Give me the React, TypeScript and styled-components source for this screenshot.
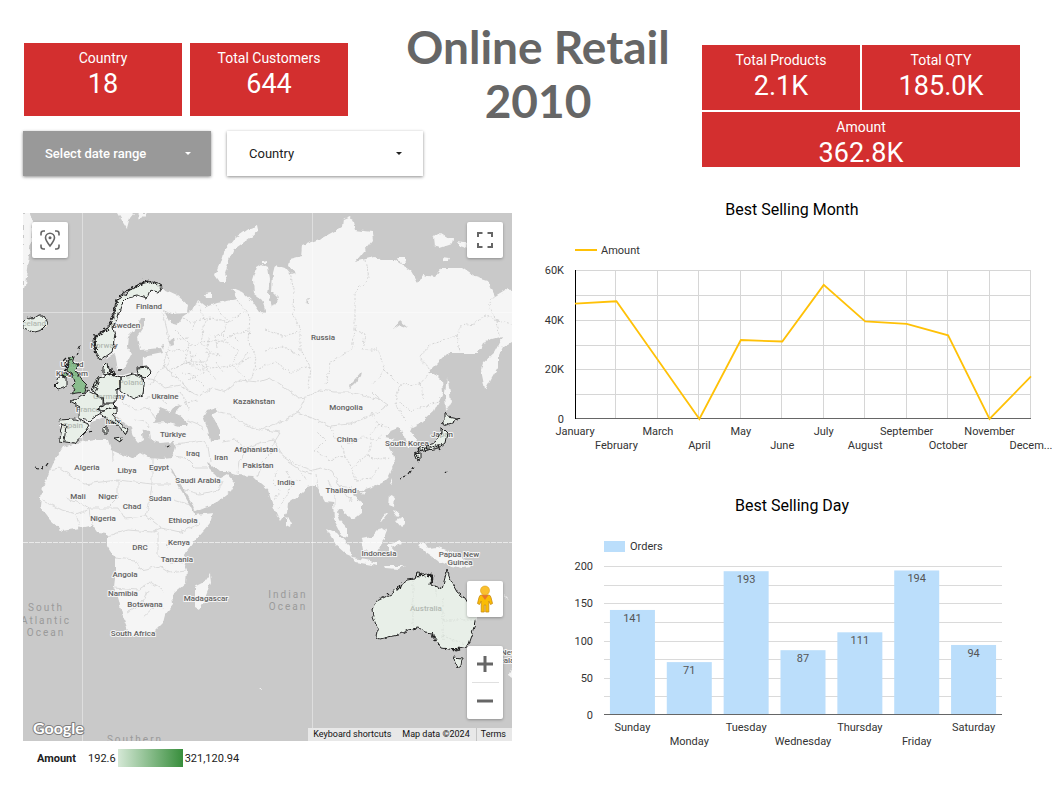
import React from "react";
import styled, { createGlobalStyle } from "styled-components";

const GlobalStyle = createGlobalStyle`
  * { box-sizing: border-box; }
  body {
    margin: 0;
    background: #fff;
    color: #212121;
    font-family: Roboto, "Liberation Sans", sans-serif;
  }
  button, select { font-family: inherit; margin: 0; border: 0; }
`;

const Page = styled.main`
  overflow: hidden;
  padding: 20px 0 16px 23px;
`;

const Header = styled.header`
  display: grid;
  grid-template-columns: minmax(0, 351fr) minmax(0, 328fr) minmax(0, 318fr);
  grid-template-areas: "counts title totals" "filters filters totals";
  row-gap: 3px;
  padding-right: 32px;
`;

const Title = styled.h1`
  grid-area: title;
  margin: 0;
  text-align: center;
  font: 700 46px/54px Lato, "Open Sans", sans-serif;
  color: #666;
`;

const Counts = styled.section`
  grid-area: counts;
  display: grid;
  grid-template-columns: 1fr 1fr;
  grid-template-rows: 73px;
  gap: 8px;
  padding: 23px 26px 0 1px;
`;

const Totals = styled.section`
  grid-area: totals;
  display: grid;
  grid-template-columns: 1fr 1fr;
  grid-template-rows: 65px 55px;
  gap: 2px;
  padding-top: 25px;
`;

const Scorecard = styled.div<{ $wide?: boolean }>`
  grid-column: ${(p) => (p.$wide ? "1 / -1" : "auto")};
  padding-top: 6px;
  background: #d32f2f;
  color: #fff;
  text-align: center;
`;

const ScoreLabel = styled.div`
  font-size: 14px;
  line-height: 18px;
`;

const ScoreValue = styled.div`
  font-size: 27px;
  line-height: 34px;
`;

const Filters = styled.section`
  grid-area: filters;
  display: flex;
  gap: 16px;
`;

const DateButton = styled.button`
  display: flex;
  align-items: center;
  justify-content: space-between;
  width: 188px;
  height: 45px;
  padding: 0 20px 0 22px;
  background: #999;
  color: #fff;
  font-size: 13px;
  font-weight: 500;
  box-shadow: 0 1px 3px rgba(0, 0, 0, 0.45);
`;

const SelectBox = styled.div`
  display: grid;
  align-items: center;
  width: 196px;
  height: 45px;
  background: #fff;
  box-shadow: 0 1px 3px rgba(0, 0, 0, 0.45);

  > * { grid-area: 1 / 1; }
  > svg { justify-self: end; margin-right: 21px; pointer-events: none; }
`;

const Select = styled.select`
  appearance: none;
  width: 100%;
  height: 100%;
  padding: 0 22px;
  background: transparent;
  color: #212121;
  font-size: 13px;
`;

const Body = styled.div`
  display: grid;
  grid-template-columns: minmax(0, 489fr) minmax(0, 540fr);
  margin-top: 24px;
`;

const MapColumn = styled.section`
  padding-top: 13px;
`;

const MapFrame = styled.div`
  position: relative;
  aspect-ratio: 489 / 528;
  overflow: hidden;
  background: #c9c9c9;
`;

const MapDrawing = styled.svg`
  display: block;
  width: 100%;
  height: 100%;
`;

const MapStack = styled.div<{ $side: "left" | "right"; $top?: number; $bottom?: number }>`
  position: absolute;
  ${(p) => p.$side}: 9px;
  ${(p) => (p.$top !== undefined ? `top: ${p.$top}px;` : `bottom: ${p.$bottom}px;`)}
  display: flex;
  flex-direction: column;
  align-items: center;
  width: 36px;
  border-radius: 2px;
  background: #fff;
  box-shadow: 0 1px 3px rgba(0, 0, 0, 0.3);
`;

const MapButton = styled.button`
  display: flex;
  align-items: center;
  justify-content: center;
  width: 36px;
  height: 36px;
  padding: 0;
  background: transparent;
  color: #666;
`;

const Divider = styled.span`
  width: 27px;
  height: 1px;
  background: #e0e0e0;
`;

const Attribution = styled.div`
  position: absolute;
  right: 0;
  bottom: 0;
  display: flex;
  height: 13px;
  background: #e8e8e8;
  color: #111;
  font-size: 9px;
  line-height: 13px;
`;

const Credit = styled.span`
  padding: 0 6px 0 5px;
`;

const ShortcutButton = styled.button`
  padding: 0 6px 0 5px;
  background: transparent;
  color: inherit;
  font-size: 9px;
  line-height: 13px;
`;

const TermsLink = styled.a`
  padding: 0 6px 0 4px;
  border-left: 1px solid #c4c4c4;
  color: inherit;
  text-decoration: none;
`;

const MapLegend = styled.div`
  display: flex;
  align-items: center;
  height: 18px;
  margin-top: 8px;
  padding-left: 14px;
  gap: 2px;
  font-size: 11px;
`;

const LegendName = styled.strong`
  margin-right: 10px;
  font-weight: 700;
`;

const Gradient = styled.span`
  width: 65px;
  height: 18px;
  background: linear-gradient(90deg, #d5e8d6, #388e3c);
`;

const Charts = styled.section`
  padding-left: 20px;
`;

const Chart = styled.figure`
  margin: 0 0 40px;
`;

const ChartTitle = styled.figcaption`
  margin-bottom: 16px;
  text-align: center;
  font-size: 16px;
  line-height: 20px;
  color: #000;
`;

const Plot = styled.svg`
  display: block;
  width: 100%;
  font-size: 11px;
  fill: #333;
`;

const CountryText = styled.text`
  font-size: 8px;
  font-weight: 500;
  text-anchor: middle;
  fill: #616161;
  stroke: #f5f5f5;
  stroke-width: 2px;
  stroke-linejoin: round;
  paint-order: stroke;
`;

const OceanText = styled.text`
  font-size: 10px;
  letter-spacing: 2px;
  text-anchor: middle;
  fill: #9a9a9a;
`;

const LogoText = styled.text`
  font: 700 16px Lato, sans-serif;
  fill: #fff;
  stroke: #808080;
  stroke-width: 2px;
  stroke-linejoin: round;
  paint-order: stroke;
`;

const Caret = () => (
  <svg width="6" height="3" viewBox="0 0 6 3" aria-hidden="true">
    <path d="M0 0h6L3 3z" fill="currentColor" />
  </svg>
);

const Score = ({ label, value, wide }: { label: string; value: string; wide?: boolean }) => (
  <Scorecard $wide={wide}>
    <ScoreLabel>{label}</ScoreLabel>
    <ScoreValue>{value}</ScoreValue>
  </Scorecard>
);

const land = [
  // Eurasia and Africa
  "M145 281L162 288 177 295 188 305 187 313 172 314 163 310 170 323 177 325 183 317 193 310 198 300 207 307 217 303 237 299 232 288 242 292 253 302 260 312 266 313 262 300 254 294 253 280 257 267 262 264 268 267 270 280 268 293 272 307 278 298 272 292 273 273 275 265 285 268 290 274 296 273 289 267 290 260 302 257 303 245 322 238 342 227 343 219 350 216 353 222 355 230 372 232 373 240 365 250 355 262 375 257 382 260 395 260 405 267 411 271 418 283 423 275 435 277 442 268 462 268 475 277 488 281 495 296 505 290 512 291H522V342H512L503 347 498 357 498 367 492 377 485 390 481 370 483 363 495 352 503 337 492 340 483 343 478 353 465 353 448 353 438 363 428 373 435 373 442 380 443 393 435 410 422 422 412 427 410 432 417 440 415 447 408 447 405 440 403 432 398 428 388 432 385 437 394 439 388 445 393 453 395 463 388 477 382 483 372 487 362 490 355 490 352 495 362 503 362 513 353 520 348 515 340 508 337 512 340 520 347 528 347 538 343 537 338 527 334 520 333 503 325 502 320 493 315 485 308 487 302 493 288 503 287 513 281 521 277 515 272 503 268 490 260 483 253 476 237 475 227 472 220 472 212 465 207 462 210 470 215 475 220 478 227 474 235 483 230 492 217 502 195 511 192 503 180 483 172 469 170 468 178 485 190 505 195 515 213 513 210 523 195 540 185 553 183 560 187 570 186 583 172 595 173 605 165 615 163 623 153 633 133 637 128 630 123 617 118 597 113 587 115 570 115 558 107 545 107 533 98 532 93 525 80 528 62 531 50 520 40 507 42 490 50 470 53 463 63 447 77 443 94 440 108 440 111 450 132 459 140 453 147 457 163 458 172 457 175 447 173 442 160 443 150 440 149 431 143 428 142 434 143 440 138 443 133 437 131 428 121 420 113 413 120 423 128 430 125 435 120 427 110 420 104 417 92 422 90 428 82 438 70 443 59 441 60 430 60 420 78 418 78 405 70 402 80 397 88 391 95 387 100 380 103 372 104 364 108 363 108 373 120 376 130 373 137 373 142 367 143 357 153 355 163 353 161 348 140 350 137 337 145 325 145 318 140 318 135 330 128 337 127 347 132 353 123 370 118 370 115 353 102 360 95 350 95 338 110 327 120 307 117 298 133 290z",
  // Novaya Zemlya, Svalbard, Greenland, Arctic islands
  "M258 225L250 228 233 240 223 253 220 263 215 275 220 282 227 282 225 273 228 263 233 250 250 238 259 230z",
  "M117 213L122 221 127 229 130 218 134 213zM137 213L140 220 147 213z",
  "M23 213H30L33 222 31 240 28 262 25 285 23 292z",
  "M433 237L440 233 448 238 453 239 452 244 440 248 434 246zM457 241L467 243 466 248 460 246zM442 257L449 258 447 262 443 261zM398 258L405 258 406 264 401 264z",
  "M205 294L211 293 211 297 206 297zM262 261L266 260 266 263 262 263z",
  // Sakhalin, Taiwan, Hainan, Philippines
  "M447 377L450 392 451 403 446 411 445 393zM392 477L392 483 389 484zM361 491L366 491 363 495zM390 495L395 497 394 507 389 505zM395 520L403 517 405 524 401 527zM393 510L398 512 400 517 396 516zM380 522L387 513 388 514 381 523z",
  // Indonesia and New Guinea
  "M361 539L372 537 380 527 387 530 382 543 378 552 363 550zM326 528L337 533 348 545 353 557 346 554 336 545zM352 558L365 560 378 563 378 566 355 562zM388 545L400 541 402 543 391 547 396 553 394 556 390 552 388 556zM384 566L405 566 398 569 385 568z",
  "M418 545L425 543 428 548 438 547 452 552 462 557 472 567 462 568 448 565 438 561 425 552z",
  // Sri Lanka, Madagascar, New Zealand
  "M286 517L291 522 290 527 286 525zM210 573L211 583 203 603 200 610 195 607 195 587 203 583zM509 675L512 668V677z",
  "M504 595L509 600 505 598zM258 688L263 688 261 690z",
];

const seas = [
  "M207 410L217 407 218 412 212 415 220 430 220 440 210 442 208 430 203 417z",
  "M153 423L160 408 170 412 173 408 182 405 176 412 188 423 187 426 180 426 165 422z",
  "M349 386L355 380 362 372 361 376 355 384 350 388z",
  "M305 302L309 298 308 303zM394 329L399 320 408 328 400 325zM166 548L168 544 166 543z",
  "M127 377L131 376 129 380zM168 341L173 338 174 344 171 345zM161 346L164 345 163 349z",
];

const borders = [
  "M162 312L166 325 170 345 164 360 168 372 178 378 190 392 200 396",
  "M143 378L155 380 165 388 180 385 190 392M145 398L158 395 168 404M123 403L135 410 150 408 155 418M133 420L145 422 150 428",
  "M188 420L198 424 205 430M175 444L190 442 203 440 208 446 210 462M175 456L185 458 195 468 208 468",
  "M200 396L212 388 225 392 240 380 258 382 270 378 285 388 298 398 307 397 320 390 335 392 350 392 365 396 380 400",
  "M218 412L230 414 240 422 255 428 262 430 275 424 285 420 298 412 305 398",
  "M298 412L312 418 330 426 350 424 365 418 378 412 388 405 378 398 372 392",
  "M222 442L235 440 246 448 240 462 238 474M246 448L262 442 275 440 280 432 265 430",
  "M275 440L272 452 262 462 258 476M275 440L282 455 295 464 312 470 322 468 332 472 340 486",
  "M288 462L300 470 312 474M316 474L318 488M328 480L335 495 335 508M340 486L352 488M340 486L352 502",
  "M113 462L112 440M152 457V484H172M60 468L84 484 118 480 152 484M60 468L48 470M118 480L118 498 108 508M152 484L150 500 146 516",
  "M92 508L118 508 124 518 146 516 162 528 180 532 200 524M66 498L90 508 92 525M42 500L62 510 76 514 80 528M76 514L92 508",
  "M107 536L128 530 152 532 162 528M158 532L158 555 168 562 182 564M115 558L135 560 140 570 160 566 170 572 186 570M114 588L138 590 150 582 165 592M128 612L142 604 148 590M142 618L155 606 164 608",
  "M174 500L190 505M178 488L200 494 218 490 222 480",
];

const regionBorders = [
  "M198 302L205 322 200 342 210 350 205 368 215 380M215 305L228 322 222 340 238 350 232 366 245 378",
  "M175 330L190 345 185 360 200 370M165 352L185 350 200 342 222 340 248 330M168 372L186 362 210 368 232 366 252 358",
  "M237 300L250 318 248 340 256 358 252 380M290 272L294 290 293 312 300 330 300 350 310 366 308 388",
  "M365 260L369 278 355 292 355 330 352 350 330 362 326 386M355 330L365 335 362 350 378 350 385 370 372 385",
  "M265 330L282 336 298 332M265 350L282 346 300 356M256 370L276 362 290 372 310 366",
  "M385 370L400 385 420 384 430 372M400 385L395 402 405 420M430 372L420 356 430 345 445 340 457 336 460 352M457 336L460 326 475 324 485 316 497 320 499 336M497 320L488 308 492 298 500 292M497 320L512 324",
  "M398 400L410 412 420 408 438 402M420 384L425 400",
  "M315 430L325 440 315 450 330 460 345 456 352 468M330 426L335 438 350 444 362 436 372 440 368 455 352 468 356 480M372 440L382 436M368 455L380 460 390 458M345 456L342 444M356 480L372 478 380 466",
  "M372 412L378 424 390 428M378 424L370 436",
  "M278 470L272 482 280 490 274 500M286 470L292 482 302 480M292 482L288 494 278 508M300 470L306 480",
  "M180 392L186 402 198 400M186 402L190 412M150 385L158 372 170 362 165 350M175 312L190 322 212 318 228 322 244 312",
  "M188 380L204 372 200 358M178 366L190 362 196 352M206 352L222 356M218 348L216 336 226 330M238 368L248 352",
  "M182 372L194 376 204 386M192 330L196 320M232 334L240 342M210 334L206 350M176 340L188 338M190 352L192 362 206 362M216 362L224 372",
];

const markets = [
  // Norway
  "M153 281L162 286 158 292 150 290 147 298 137 295 128 297 122 303 118 317 113 327 115 335 112 352 101 360 95 350 94 338 108 328 115 313 117 300 130 290 143 283z",
  // Iceland
  "M23 322L28 317 32 319 38 315 43 315 46 320 47 325 42 330 35 332 30 331 23 328z",
  // Ireland
  "M57 378L61 375 66 378 66 386 58 389 55 386 58 383z",
  // Spain and Portugal
  "M59 420L75 419 90 425 87 430 80 437 75 443 65 442 59 441 60 432 62 425zM61 424L66 426 64 441",
  // France
  "M70 402L80 397 88 391 102 398 102 405 98 408 102 413 92 419 90 421 79 419 79 407z",
  // Benelux and Germany
  "M92 388L98 378 103 377 108 374 120 378 120 387 117 390 117 398 113 403 103 403 102 397 97 395z",
  "M92 389L97 387 99 378M95 394L98 388",
  // Denmark
  "M103 367L108 362 109 370 107 375 103 374zM110 371L113 370 114 374 111 375z",
  // Switzerland, Italy
  "M98 408L104 404 113 404 116 407 110 408 104 411z",
  "M102 412L110 408 117 407 117 412 112 414 120 423 128 430 125 436 120 427 110 420 104 417zM114 438L122 437 120 442zM104 427L107 426 107 434 104 434z",
  // Poland, Lithuania
  "M120 378L133 374 143 377 144 385 143 395 135 398 125 394 120 390z",
  "M137 368L148 367 151 373 146 378 138 375z",
  // Japan
  "M445 413L448 417 457 419 452 423 445 425 441 423 445 420z",
  "M442 428L447 433 445 443 438 448 428 450 420 452 418 449 430 445 438 440 442 433zM415 454L420 453 420 460 417 459z",
  // Australia
  "M372 610L375 602 393 593 398 587 408 580 415 579 417 573 432 575 431 584 442 589 447 570 452 583 457 592 465 598 476 617 474 627 467 647 455 650 442 648 435 638 432 633 425 632 418 628 408 630 398 635 388 637 380 639 377 637 378 630 373 617z",
  "M453 657L462 658 461 665 457 668z",
];

const unitedKingdom =
  "M70 358L75 357 73 363 78 365 75 372 78 373 82 380 87 385 85 392 70 394 75 390 72 385 75 382 72 373 67 370 68 363zM62 375L67 373 68 377 64 378z";

const ruggedCoasts = [
  "M96 352L94 338 108 328 112 318 117 302",
  "M116 302L122 294 133 288 145 281 161 286",
  "M66 374L66 366 70 359",
  "M110 369L114 376M93 388L98 380",
  "M418 451L432 447 442 445M415 452L419 461",
  "M415 575L432 575 432 583M432 633L435 641",
  "M397 589L402 584M452 649L460 649",
];

const outerIslands =
  "M78 350L80 346M77 355L78 352M63 361L66 358M35 468L38 469M41 468L43 467M46 467L48 464M84 434L86 433M89 432L92 431M413 466L412 469M410 471L408 474M406 476L404 477M400 479L402 478M387 594L388 593M441 451L440 448M446 471L447 472M457 420L460 418M167 447L169 446M119 370L121 370";

const countryLabels: [string, number, number][] = [
  ["Finland", 149, 309], ["Sweden", 126, 328], ["Norway", 104, 348], ["Iceland", 33, 326],
  ["United", 72, 367], ["Kingdom", 72, 376], ["Poland", 131, 385], ["Germany", 109, 399],
  ["France", 88, 412], ["Spain", 73, 428], ["Italy", 113, 424], ["Ukraine", 165, 399], ["Türkiye", 173, 437],
  ["Kazakhstan", 254, 404], ["Russia", 323, 340], ["Mongolia", 346, 410], ["China", 347, 442],
  ["South Korea", 407, 446], ["Japan", 442, 437], ["Afghanistan", 256, 452], ["Pakistan", 258, 468],
  ["Iraq", 193, 456], ["Iran", 221, 460], ["Saudi Arabia", 198, 483], ["Egypt", 159, 470],
  ["Algeria", 87, 470], ["Libya", 127, 473], ["Mali", 78, 499], ["Niger", 108, 499],
  ["Chad", 132, 509], ["Sudan", 160, 501], ["Nigeria", 103, 521], ["Ethiopia", 183, 523],
  ["Kenya", 179, 545], ["DRC", 140, 550], ["Tanzania", 177, 562], ["Angola", 125, 577],
  ["Namibia", 123, 596], ["Botswana", 145, 607], ["South Africa", 133, 636], ["Madagascar", 206, 601],
  ["India", 286, 485], ["Thailand", 341, 493], ["Indonesia", 379, 556], ["Papua New", 459, 557],
  ["Guinea", 460, 565], ["Australia", 426, 611], ["New", 509, 655], ["Zealand", 509, 663],
];

const oceanLabels: [string, number, number][] = [
  ["South", 46, 611], ["Atlantic", 46, 624], ["Ocean", 46, 636],
  ["Indian", 288, 598], ["Ocean", 288, 610], ["Southern", 135, 743],
];

const WorldMap = () => (
  <MapDrawing viewBox="23 213 489 528" preserveAspectRatio="xMidYMid slice" role="img" aria-label="Amount by country">
    <defs>
      <filter id="coast" x="0" y="0" width="100%" height="100%" colorInterpolationFilters="sRGB">
        <feTurbulence type="fractalNoise" baseFrequency="0.16" numOctaves="2" seed="4" />
        <feDisplacementMap in="SourceGraphic" scale="5" xChannelSelector="R" yChannelSelector="G" />
      </filter>
      <filter id="fjords" x="-5%" y="-5%" width="110%" height="110%" colorInterpolationFilters="sRGB">
        <feTurbulence type="fractalNoise" baseFrequency="0.3" numOctaves="3" seed="9" />
        <feDisplacementMap in="SourceGraphic" scale="6" xChannelSelector="R" yChannelSelector="G" />
      </filter>
    </defs>
    <g filter="url(#coast)">
      <rect x="13" y="203" width="509" height="548" fill="#c9c9c9" />
      <g fill="#f5f5f5">
        {land.map((d) => <path key={d} d={d} />)}
        {markets.map((d) => <path key={d} d={d} />)}
      </g>
      <g fill="#c9c9c9">{seas.map((d) => <path key={d} d={d} />)}</g>
      <g fill="none" stroke="#c8c8c8" strokeWidth="0.6">
        {borders.map((d) => <path key={d} d={d} />)}
      </g>
      <g fill="none" stroke="#cbcbcb" strokeWidth="0.8" strokeDasharray="2 1.4">
        {regionBorders.map((d) => <path key={d} d={d} />)}
      </g>
    </g>
    <g stroke="#fff" strokeOpacity="0.4">
      <path d="M82.500 213V741M312.500 213V741M23 312.500H512" />
      <path d="M23 542.500H512" strokeDasharray="5 1" strokeOpacity="0.6" />
    </g>
    {countryLabels.map(([name, x, y]) => (
      <CountryText key={name} x={x} y={y}>{name}</CountryText>
    ))}
    {oceanLabels.map(([name, x, y]) => (
      <OceanText key={name + x + y} x={x} y={y}>{name}</OceanText>
    ))}
    <g filter="url(#coast)">
      <g fill="#dfebe0" fillOpacity="0.64" strokeLinejoin="round">
        {markets.map((d) => <path key={d} d={d} />)}
        <path d={unitedKingdom} fill="#7fb984" fillOpacity="0.88" />
      </g>
      <g fill="none" stroke="#222" strokeWidth="1" strokeLinejoin="round">
        {markets.map((d) => <path key={d} d={d} />)}
        <path d={unitedKingdom} />
      </g>
      <path d={outerIslands} fill="none" stroke="#222" strokeWidth="1.300" />
      <path d="M413 581V628M436 580V597M443 598V640M443 620H475M443 636L465 644" fill="none" stroke="#d3dad3" strokeWidth="0.7" strokeDasharray="2 1.4" />
    </g>
    <g filter="url(#fjords)" fill="none" stroke="#222" strokeWidth="2.400" strokeDasharray="2 1">
      {ruggedCoasts.map((d) => <path key={d} d={d} />)}
    </g>
    <LogoText x="33" y="734">Google</LogoText>
  </MapDrawing>
);

const PinIcon = () => (
  <svg width="20" height="20" viewBox="0 0 20 20" fill="none" stroke="#666" strokeWidth="1.600">
    <path d="M1 5.500V3.500Q1 1 3.500 1H5M15 1h1.500Q19 1 19 3.500V5.500M19 14.500v2Q19 19 16.500 19H15M5 19H3.500Q1 19 1 16.500V14.500" />
    <path d="M10 16C7.500 12.800 5.500 10 5.500 7.800a4.500 4.500 0 0 1 9 0C14.500 10 12.500 12.800 10 16z" />
    <circle cx="10" cy="7.800" r="1.500" fill="#666" stroke="none" />
  </svg>
);

const FullscreenIcon = () => (
  <svg width="16" height="16" viewBox="0 0 16 16" fill="none" stroke="#666" strokeWidth="2">
    <path d="M1 5V1H5.500M10.500 1H15V5M15 11V15H10.500M5.500 15H1V11" />
  </svg>
);

const Pegman = () => (
  <svg width="16" height="28" viewBox="0 0 16 28">
    <path d="M4.500 10H11.500Q13.500 10 14 12.500L15.500 18.500 13.500 19.500 11.800 16V27H8.700V20H7.300V27H4.200V16L2.500 19.500.5 18.500 2 12.500Q2.500 10 4.500 10z" fill="#fbbc04" stroke="#c98a12" strokeWidth="0.8" />
    <path d="M4.500 10H11.500L8 15z" fill="#e8762c" />
    <circle cx="8" cy="5.500" r="4.500" fill="#fbc02d" stroke="#d9a01a" strokeWidth="0.6" />
  </svg>
);

const ZoomIcon = ({ plus }: { plus?: boolean }) => (
  <svg width="16" height="16" viewBox="0 0 16 16" stroke="#666" strokeWidth="3">
    <path d={plus ? "M0 8H16M8 0V16" : "M0 8H16"} />
  </svg>
);

const LEFT_FOR_LINE = 43;
const TOP = 34;
const BASE = 183;

const months: [string, number][] = [
  ["January", 46.5], ["February", 47.4], ["March", 23.8], ["April", 0], ["May", 31.8], ["June", 31.2],
  ["July", 54], ["August", 39.3], ["September", 38.3], ["October", 33.7], ["November", 0], ["Decem...", 17.2],
];

const days: [string, number][] = [
  ["Sunday", 141], ["Monday", 71], ["Tuesday", 193], ["Wednesday", 87],
  ["Thursday", 111], ["Friday", 194], ["Saturday", 94],
];

const MonthChart = () => {
  const right = 499;
  const x = (i: number) => LEFT_FOR_LINE + (i * (right - LEFT_FOR_LINE)) / 11;
  const y = (v: number) => BASE - (v * (BASE - TOP)) / 60;
  return (
    <Plot viewBox="0 0 520 220" role="img" aria-label="Amount by month">
      <path d="M43 14H65" stroke="#ffc107" strokeWidth="2" />
      <text x="69" y="18">Amount</text>
      <g stroke="#d6d6d6">
        {[10, 20, 30, 40, 50, 60].map((v) => (
          <path key={v} d={`M${LEFT_FOR_LINE} ${Math.round(y(v)) + 0.5}H${right}`} />
        ))}
        {months.slice(1).map(([m], i) => (
          <path key={m} d={`M${Math.round(x(i + 1)) - 0.5} ${TOP}V${BASE}`} />
        ))}
      </g>
      <path d={`M${LEFT_FOR_LINE} ${BASE - 0.5}H${right}`} stroke="#666" />
      <path d={`M${LEFT_FOR_LINE + 0.5} ${TOP}V${BASE}`} stroke="#000" />
      {[0, 20, 40, 60].map((v) => (
        <text key={v} x="32" y={y(v) + 4} textAnchor="end">{v ? `${v}K` : "0"}</text>
      ))}
      <polyline
        points={months.map(([, v], i) => `${x(i)},${y(v)}`).join(" ")}
        fill="none"
        stroke="#ffc107"
        strokeWidth="1.800"
      />
      {months.map(([m], i) => (
        <text key={m} x={x(i)} y={i % 2 ? 213 : 199} textAnchor="middle">{m}</text>
      ))}
    </Plot>
  );
};

const DayChart = () => {
  const left = 72;
  const right = 470;
  const x = (i: number) => left + ((i + 0.5) * (right - left)) / 7;
  const y = (v: number) => BASE - (v * (BASE - TOP)) / 200;
  return (
    <Plot viewBox="0 0 520 220" role="img" aria-label="Orders by day">
      <rect x={left} y="9" width="21" height="11" fill="#bbdefb" />
      <text x="98" y="18">Orders</text>
      <g stroke="#dadada">
        {[25, 50, 75, 100, 125, 150, 175, 200].map((v) => (
          <path key={v} d={`M${left} ${Math.round(y(v)) + 0.5}H${right}`} />
        ))}
      </g>
      {[0, 50, 100, 150, 200].map((v) => (
        <text key={v} x="61" y={y(v) + 4} textAnchor="end">{v}</text>
      ))}
      {days.map(([d, v], i) => (
        <g key={d}>
          <rect x={x(i) - 22.5} y={y(v)} width="45" height={BASE - y(v)} fill="#bbdefb" />
          <text x={x(i)} y={y(v) + 12} textAnchor="middle" fill="#555">{v}</text>
          <text x={x(i)} y={i % 2 ? 213 : 199} textAnchor="middle">{d}</text>
        </g>
      ))}
      <path d={`M${left} ${BASE - 0.5}H${right}`} stroke="#666" />
    </Plot>
  );
};

export default function App() {
  return (
    <>
      <GlobalStyle />
      <Page>
        <Header>
          <Counts>
            <Score label="Country" value="18" />
            <Score label="Total Customers" value="644" />
          </Counts>
          <Title>Online Retail<br />2010</Title>
          <Totals>
            <Score label="Total Products" value="2.1K" />
            <Score label="Total QTY" value="185.0K" />
            <Score label="Amount" value="362.8K" wide />
          </Totals>
          <Filters>
            <DateButton type="button">Select date range<Caret /></DateButton>
            <SelectBox>
              <Select aria-label="Country" defaultValue="Country">
                <option>Country</option>
              </Select>
              <Caret />
            </SelectBox>
          </Filters>
        </Header>
        <Body>
          <MapColumn>
            <MapFrame>
              <WorldMap />
              <MapStack $side="left" $top={9}>
                <MapButton type="button" aria-label="Reset map view"><PinIcon /></MapButton>
              </MapStack>
              <MapStack $side="right" $top={9}>
                <MapButton type="button" aria-label="Toggle fullscreen"><FullscreenIcon /></MapButton>
              </MapStack>
              <MapStack $side="right" $bottom={124}>
                <MapButton type="button" aria-label="Street View"><Pegman /></MapButton>
              </MapStack>
              <MapStack $side="right" $bottom={22}>
                <MapButton type="button" aria-label="Zoom in"><ZoomIcon plus /></MapButton>
                <Divider />
                <MapButton type="button" aria-label="Zoom out"><ZoomIcon /></MapButton>
              </MapStack>
              <Attribution>
                <ShortcutButton type="button">Keyboard shortcuts</ShortcutButton>
                <Credit>Map data ©2024</Credit>
                <TermsLink href="#terms">Terms</TermsLink>
              </Attribution>
            </MapFrame>
            <MapLegend>
              <LegendName>Amount</LegendName>
              <span>192.6</span>
              <Gradient />
              <span>321,120.94</span>
            </MapLegend>
          </MapColumn>
          <Charts>
            <Chart>
              <ChartTitle>Best Selling Month</ChartTitle>
              <MonthChart />
            </Chart>
            <Chart>
              <ChartTitle>Best Selling Day</ChartTitle>
              <DayChart />
            </Chart>
          </Charts>
        </Body>
      </Page>
    </>
  );
}
